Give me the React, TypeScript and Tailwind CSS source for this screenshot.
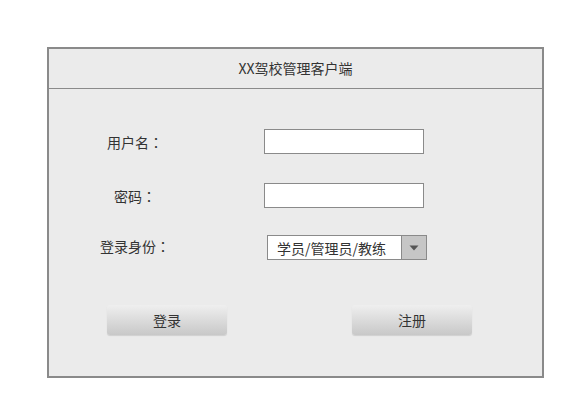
import React from "react";

const Colon = () => (
  <span style={{ fontFamily: '"Noto Sans CJK TC", "Noto Sans CJK SC", sans-serif' }}>：</span>
);

export default function App() {
  const font = { fontFamily: '"Noto Sans CJK SC", "Noto Sans", sans-serif' };
  return (
    <div className="w-[575px] h-[409px] bg-white pt-[47px] pl-[47px] text-[#333333]" style={font}>
      <div className="w-[497px] h-[331px] border-2 border-[#8a8a8a] bg-[#ebebeb] flex flex-col">
        <div className="h-[40px] border-b border-[#8a8a8a] flex items-center justify-center text-[14px] leading-none pb-[1px]">
          XX驾校管理客户端
        </div>
        <div className="flex flex-col pt-[40px]">
          <div className="flex items-center h-[25px]">
            <div className="w-[170px] text-center text-[14px] leading-none pl-[2px]">用户名<Colon /></div>
            <input className="ml-[45px] w-[160px] h-[25px] border border-[#8a8a8a] bg-white outline-none" />
          </div>
          <div className="flex items-center h-[25px] mt-[29px]">
            <div className="w-[170px] text-center text-[14px] leading-none pl-[2px]">密码<Colon /></div>
            <input type="password" className="ml-[45px] w-[160px] h-[25px] border border-[#8a8a8a] bg-white outline-none" />
          </div>
          <div className="flex items-center h-[25px] mt-[27px]">
            <div className="w-[170px] text-center text-[14px] leading-none mb-[4px] pl-[2px]">登录身份<Colon /></div>
            <div className="ml-[48px] w-[160px] h-[25px] border border-[#8a8a8a] bg-white flex">
              <div className="flex-1 flex items-center pl-[9px] text-[14px] leading-none">学员/管理员/教练</div>
              <div className="w-[25px] h-full border-l border-[#8a8a8a] bg-[#c6c6c6] flex items-center justify-center">
                <svg width="10" height="6" viewBox="0 0 10 6">
                  <path d="M0.5 0.5 L9.5 0.5 L5 5.5 Z" fill="#555555" />
                </svg>
              </div>
            </div>
          </div>
          <div className="flex mt-[45px]">
            <button className="ml-[58px] w-[120px] h-[30px] rounded-[3px] bg-gradient-to-b from-[#efefef] to-[#c8c8c8] shadow-[0_1px_1px_rgba(0,0,0,0.12)] text-[14px] leading-none text-[#333333]">
              登录
            </button>
            <button className="ml-[125px] w-[120px] h-[30px] rounded-[3px] bg-gradient-to-b from-[#efefef] to-[#c8c8c8] shadow-[0_1px_1px_rgba(0,0,0,0.12)] text-[14px] leading-none text-[#333333]">
              注册
            </button>
          </div>
        </div>
      </div>
    </div>
  );
}
